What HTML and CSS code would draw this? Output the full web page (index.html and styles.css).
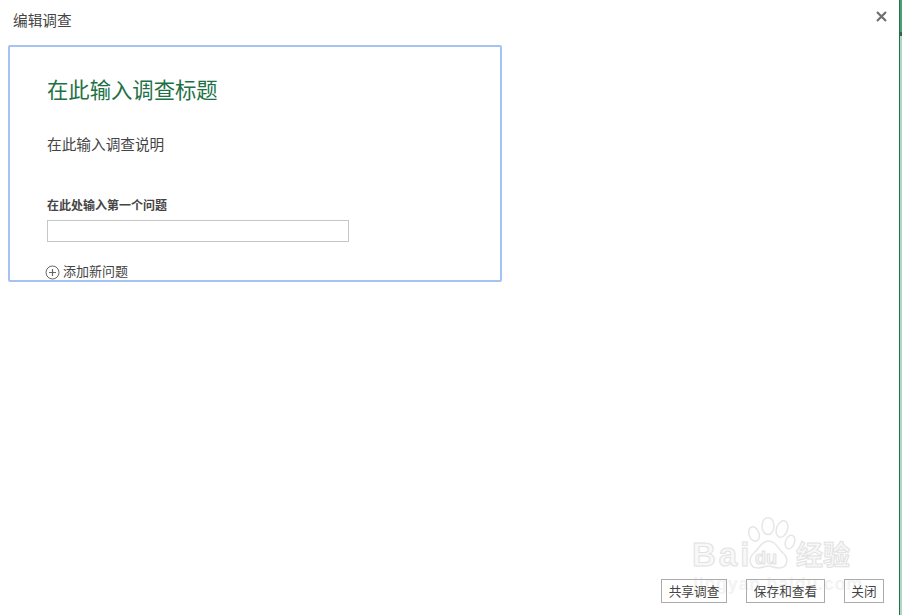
FILE: index.html
```html
<!DOCTYPE html>
<html lang="zh">
<head>
<meta charset="utf-8">
<title>编辑调查</title>
<link rel="stylesheet" href="styles.css">
</head>
<body>
<div class="sheet-edge"></div>
<div class="dialog">
  <header class="dialog-head">
    <h1 class="dialog-title">编辑调查</h1>
    <svg class="close-icon" width="11" height="11" viewBox="0 0 11 11"><path d="M1 1l9 9M10 1l-9 9" stroke="#6f6f6f" stroke-width="2.2" fill="none"/></svg>
  </header>
  <main class="form-card">
    <div class="form-title">在此输入调查标题</div>
    <div class="form-desc">在此输入调查说明</div>
    <label class="question-label">在此处输入第一个问题</label>
    <div class="question-input"></div>
    <div class="add-question">
      <svg class="plus-icon" width="15" height="15" viewBox="0 0 15 15"><circle cx="7.5" cy="7.5" r="6.5" fill="none" stroke="#666" stroke-width="1"/><path d="M4 7.5h7M7.5 4v7" stroke="#666" stroke-width="1.2" fill="none"/></svg>
      <span>添加新问题</span>
    </div>
  </main>
  <footer class="dialog-foot">
    <button class="btn btn-share">共享调查</button>
    <button class="btn btn-save">保存和查看</button>
    <button class="btn btn-close">关闭</button>
  </footer>
</div>
<div class="watermark">
  <svg class="paw" width="60" height="56" viewBox="0 0 60 56">
    <g fill="#fff" stroke="#e6e6e6" stroke-width="1.5">
      <ellipse cx="11" cy="17" rx="5" ry="7.5" transform="rotate(-20 11 17)"/>
      <ellipse cx="25" cy="9" rx="6" ry="8.5"/>
      <ellipse cx="39" cy="12" rx="5.5" ry="8.5" transform="rotate(20 39 12)"/>
      <ellipse cx="47" cy="25" rx="4.5" ry="7" transform="rotate(20 47 25)"/>
      <path d="M25 24c-7 0-9 8-14 12-6 5-5 15 4 15 5 0 7-2 10-2s6 2 11 2c9 0 10-10 4-15-5-4-7-12-15-12z"/>
    </g>
  </svg>
  <span class="wm-bai">Bai</span><span class="wm-du">du</span><span class="wm-cn">经验</span>
  <div class="wm-url">jingyan.baidu.com</div>
</div>
</body>
</html>
```
FILE: styles.css
```css
* { box-sizing: border-box; }
html, body { margin: 0; padding: 0; height: 100%; overflow: hidden; background: #fff; }
body {
  position: relative;
  width: 902px;
  height: 615px;
  font-family: "Liberation Sans", "Noto Sans CJK SC", sans-serif;
  color: #444;
}
.sheet-edge {
  position: absolute;
  top: 0;
  right: 0;
  bottom: 0;
  width: 3px;
  border-left: 1px solid #217346;
  background: linear-gradient(#4f9c78 0 32px, #3f5f50 32px 36px, #b4d6c6 36px);
}
.dialog {
  display: flex;
  flex-direction: column;
  width: 899px;
  height: 615px;
  padding: 0 0 12px 8px;
}
.dialog-head {
  display: flex;
  justify-content: space-between;
  align-items: center;
  height: 45px;
  padding: 0 12px 6px 5px;
}
.dialog-title { margin: 0; font-size: 14.67px; font-weight: 400; color: #444; }
.close-icon { display: block; margin-top: -6px; }
.form-card {
  width: 494px;
  height: 237px;
  padding: 30px 37px 0;
  border: 2px solid #a4c2f4;
  border-radius: 2px;
  overflow: hidden;
}
.form-title { font-size: 21.33px; line-height: 28px; color: #1e7145; }
.form-desc { margin-top: 30px; font-size: 14.67px; line-height: 20px; color: #444; }
.question-label { display: block; margin-top: 42px; font-size: 12px; line-height: 18px; font-weight: 700; color: #444; }
.question-input { width: 302px; height: 22px; margin-top: 5px; border: 1px solid #c6c6c6; background: #fff; }
.add-question { display: flex; align-items: center; gap: 3px; margin: 20px 0 0 -2px; font-size: 13px; line-height: 20px; color: #444; }
.plus-icon { display: block; }
.dialog-foot {
  display: flex;
  justify-content: flex-end;
  gap: 19px;
  margin-top: auto;
  padding-right: 15px;
}
.btn {
  height: 24px;
  padding: 0 0 2px;
  border: 1px solid #ababab;
  background: transparent;
  font: 12.67px "Liberation Sans", "Noto Sans CJK SC", sans-serif;
  color: #444;
  position: relative;
  z-index: 2;
}
.btn-share { width: 66px; }
.btn-save { width: 79px; }
.btn-close { width: 40px; }
.watermark {
  position: absolute;
  left: 690px;
  top: 516px;
  width: 200px;
  height: 90px;
  pointer-events: none;
}
.paw { position: absolute; left: 53px; top: 1px; }
.wm-bai, .wm-du, .wm-cn {
  position: absolute;
  font-weight: 700;
  color: #f8f8f8;
  -webkit-text-stroke: 1px #e2e2e2;
}
.wm-bai { left: 2px; top: 21px; font-size: 33px; line-height: 36px; letter-spacing: 3px; }
.wm-du { left: 65px; top: 32px; font-size: 18px; line-height: 20px; }
.wm-cn { left: 106px; top: 20px; font-size: 27px; line-height: 36px; font-family: "Noto Sans CJK SC", sans-serif; }
.wm-url { position: absolute; left: 3px; top: 58px; font-size: 18px; line-height: 20px; letter-spacing: 0.7px; font-weight: 700; color: #f3f3f3; white-space: nowrap; }
```
